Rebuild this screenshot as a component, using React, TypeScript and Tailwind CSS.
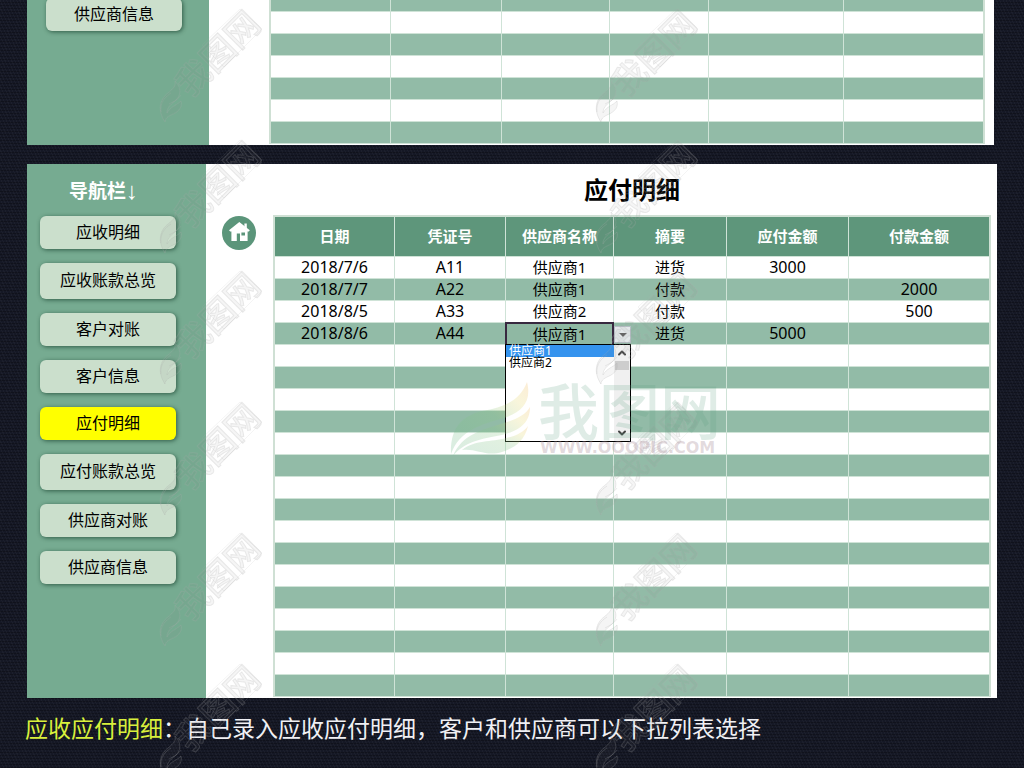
import { useState } from 'react';
import { ChevronDown, ChevronUp } from 'lucide-react';

const navItems = [
  { label: '应收明细' },
  { label: '应收账款总览', tall: true },
  { label: '客户对账' },
  { label: '客户信息' },
  { label: '应付明细', active: true },
  { label: '应付账款总览', tall: true },
  { label: '供应商对账' },
  { label: '供应商信息' },
];

const headers = ['日期', '凭证号', '供应商名称', '摘要', '应付金额', '付款金额'];

const records = [
  { date: '2018/7/6', no: 'A11', supplier: '供应商1', note: '进货', due: '3000', paid: '' },
  { date: '2018/7/7', no: 'A22', supplier: '供应商1', note: '付款', due: '', paid: '2000' },
  { date: '2018/8/5', no: 'A33', supplier: '供应商2', note: '付款', due: '', paid: '500' },
  { date: '2018/8/6', no: 'A44', supplier: '供应商1', note: '进货', due: '5000', paid: '' },
];

const suppliers = ['供应商1', '供应商2'];

const cell = 'border-r border-b border-[#cfe3d7] p-0 last:border-r-0';

const NavButton = ({ label, tall, active }: { label: string; tall?: boolean; active?: boolean }) => (
  <button
    className={`w-[136px] shrink-0 rounded-md pb-[2px] text-base text-black shadow-[1px_1px_4px_rgba(20,60,40,0.7)] ${
      tall ? 'h-9' : 'h-[33px]'
    } ${active ? 'bg-[#ffff00]' : 'bg-[#cbdfcc]'}`}
  >
    {label}
  </button>
);

const HomeIcon = () => (
  <svg viewBox="0 0 34 34" className="h-[34px] w-[34px]" aria-hidden="true">
    <circle cx="17" cy="17" r="17" fill="#5b957a" />
    <path
      fill="#fff"
      fillRule="evenodd"
      d="M17.3 6 27.8 14.2 26.8 15.6H25.6V25H18V17.4H14.8V25H9.4V15.6H8.2L7 14.2ZM19.4 16.4V19.4H23V16.4Z"
    />
    <path fill="#fff" d="M22.4 7.6h2.4v5l-2.4-2z" />
  </svg>
);

const SupplierPicker = () => {
  const [value, setValue] = useState(suppliers[0]);

  return (
    <div className="relative h-[21px]">
      <select
        aria-label="供应商名称"
        value={value}
        onChange={(e) => setValue(e.target.value)}
        className="absolute -top-px -left-px h-6 w-[calc(100%+2px)] appearance-none border-2 border-[#37283f] bg-[#8fb8a3] pb-[2px] text-center text-[15px] leading-5 text-black [text-align-last:center]"
      >
        {suppliers.map((s) => (
          <option key={s}>{s}</option>
        ))}
      </select>
      <button
        aria-label="展开"
        className="absolute top-[3px] left-full ml-px flex h-[17px] w-[17px] items-center justify-center border border-[#b5bdc4] bg-[#e3e8ea]"
      >
        <svg viewBox="0 0 8 4" className="h-1 w-2" aria-hidden="true">
          <path d="M0 0h8L4 4z" fill="#666" />
        </svg>
      </button>
      <div className="absolute top-[21px] -left-px z-10 flex h-[98px] w-[126px] border border-black bg-white">
        <ul role="listbox" aria-label="供应商列表" className="flex-1 text-left text-xs leading-3">
          {suppliers.map((s) => (
            <li
              key={s}
              role="option"
              aria-selected={s === value}
              onClick={() => setValue(s)}
              className={`h-3 pl-[3px] ${s === value ? 'bg-[#3593ee] text-white' : 'text-black'}`}
            >
              {s}
            </li>
          ))}
        </ul>
        <div className="flex w-4 flex-col items-center bg-[#f0f0f0]">
          <ChevronUp className="my-[2px] h-3 w-3 text-[#444]" strokeWidth={4} />
          <div className="h-[9px] w-[14px] bg-[#cdcdcd]" />
          <ChevronDown className="mt-auto mb-[2px] h-3 w-3 text-[#444]" strokeWidth={4} />
        </div>
      </div>
    </div>
  );
};

// Site marks laid over the whole page
const Watermarks = () => (
  <div className="pointer-events-none absolute inset-0 z-20 overflow-hidden" aria-hidden="true">
    <svg className="h-full w-full">
      <defs>
        <pattern id="mark" width="436" height="131" patternUnits="userSpaceOnUse">
          <g fill="#777" fillOpacity="0.07" stroke="#aaa" strokeOpacity="0.22">
            <path d="M165 122C157 110 160 99 168 93 174 88 176 86 175 81 182 88 181 96 175 101 170 105 167 108 167 113 171 106 176 106 181 101 183 109 176 113 171 115 167 117 165 119 165 122Z" />
            <path d="M161 112C160 102 165 97 171 93M169 104C175 101 178 99 181 95" fill="none" />
            <text x="-38" y="12" fontSize="34" fontWeight="500" transform="translate(209 63) rotate(-45)">
              我图网
            </text>
            <path d="M202 45 224 67 262 29 240 9Z" fill="none" strokeOpacity="0.12" />
          </g>
        </pattern>
        <linearGradient id="leaf" x1="0" y1="1" x2="1" y2="0">
          <stop offset="0" stopColor="#6fb98c" />
          <stop offset="0.55" stopColor="#8cc787" />
          <stop offset="0.8" stopColor="#e6da74" />
          <stop offset="1" stopColor="#f4b860" />
        </linearGradient>
      </defs>
      <rect width="100%" height="100%" fill="url(#mark)" />
      <g transform="translate(448 380)" fill="url(#leaf)" fillOpacity="0.26">
        <path d="M3 74C2 48 14 36 34 31 58 27 72 20 79 2 84 22 74 32 56 38 32 45 12 50 3 74Z" />
        <path d="M5 76C14 54 34 50 56 43 70 39 78 34 82 27 82 44 70 51 54 55 32 59 16 62 5 76Z" />
        <path d="M14 70C26 60 44 62 58 58 68 56 76 52 80 46 76 62 66 68 54 72 38 77 28 68 14 70Z" />
      </g>
      <text x="538" y="435" fontSize="61" fontWeight="500" fill="#5f9f80" fillOpacity="0.2">我图网</text>
      <text x="540" y="453" fontSize="16" fontWeight="700" fill="#a88c98" fillOpacity="0.32" className="font-['DejaVu_Sans',sans-serif]">
        WWW.OOOPIC.COM
      </text>
    </svg>
  </div>
);

const App = () => {
  const blankRows = Array.from({ length: 16 }, (_, i) => i);

  return (
    <div
      lang="zh-CN"
      className="relative min-h-screen overflow-hidden bg-[#151825] bg-[repeating-linear-gradient(65deg,rgba(255,255,255,0.03)_0_1px,transparent_1px_3px),repeating-linear-gradient(0deg,rgba(0,0,0,0.25)_0_1px,transparent_1px_3px)] px-[27px] font-['Noto_Sans','Noto_Sans_CJK_SC',sans-serif] text-black"
    >
      {/* Previous sheet, scrolled out at the top */}
      <section className="mr-[3px] flex h-[145px] overflow-hidden bg-white">
        <aside className="-mt-[2px] w-[182px] shrink-0 bg-[#76ab91] pl-[19px]">
          <NavButton label="供应商信息" />
        </aside>
        <div className="flex-1 pr-[9px] pl-[60px]">
          <div className="border-x-2 border-[#cfe0d4]">
            <table className="w-full table-fixed border-separate border-spacing-0" aria-label="客户明细">
              <colgroup>
                <col className="w-[120px]" />
                <col className="w-[111px]" />
                <col className="w-[108px]" />
                <col className="w-[99px]" />
                <col className="w-[135px]" />
                <col className="w-[139px]" />
              </colgroup>
              <tbody>
                {[0, 1, 2, 3, 4, 5, 6].map((row) => (
                  <tr key={row} className={`${row === 0 ? 'h-3' : 'h-[22px]'} ${row % 2 === 0 ? 'bg-[#92bba7]' : 'bg-white'}`}>
                    {headers.map((h) => (
                      <td key={h} className={cell} />
                    ))}
                  </tr>
                ))}
              </tbody>
            </table>
          </div>
        </div>
      </section>

      {/* Payables sheet */}
      <section className="mt-[19px] flex bg-white">
        <aside className="flex w-[179px] shrink-0 flex-col gap-[14px] bg-[#76ab91] pl-[13px]">
          <h2 className="flex h-[38px] items-center pt-4 pl-[29px] text-[19px] leading-6 font-bold text-white">
            导航栏<span className="font-['Liberation_Serif',serif] text-2xl leading-6 font-normal">↓</span>
          </h2>
          {navItems.map((item) => (
            <NavButton key={item.label} {...item} />
          ))}
        </aside>
        <div className="flex flex-1 gap-[17px] pr-[6px] pb-px pl-4">
          <a href="#home" aria-label="首页" className="mt-[52px] h-[34px] shrink-0">
            <HomeIcon />
          </a>
          <div className="flex-1">
            <h1 className="h-[51px] pt-[10px] text-center text-2xl leading-8 font-bold">应付明细</h1>
            <div className="border-x-2 border-t-2 border-[#cfe0d4]">
              <table className="w-full table-fixed border-separate border-spacing-0 text-center">
                <colgroup>
                  <col className="w-[120px]" />
                  <col className="w-[111px]" />
                  <col className="w-[108px]" />
                  <col className="w-[113px]" />
                  <col className="w-[122px]" />
                  <col className="w-[140px]" />
                </colgroup>
                <thead>
                  <tr className="h-10 bg-[#5e967b] text-[15px] leading-5 text-white">
                    {headers.map((h) => (
                      <th key={h} className="border-r border-b border-[#cfe3d7] p-0 pb-[2px] font-bold last:border-r-0">
                        {h}
                      </th>
                    ))}
                  </tr>
                </thead>
                <tbody>
                  {records.map((r, i) => (
                    <tr key={r.no} className={`h-[22px] text-[15px] leading-[21px] ${i % 2 ? 'bg-[#92bba7]' : 'bg-white'}`}>
                      <td className={`${cell} text-base leading-[21px]`}>{r.date}</td>
                      <td className={`${cell} text-base leading-[21px]`}>{r.no}</td>
                      <td className={cell}>{i === 3 ? <SupplierPicker /> : r.supplier}</td>
                      <td className={cell}>{r.note}</td>
                      <td className={`${cell} text-base leading-[21px]`}>{r.due}</td>
                      <td className={`${cell} text-base leading-[21px]`}>{r.paid}</td>
                    </tr>
                  ))}
                  {blankRows.map((row) => (
                    <tr key={row} className={`h-[22px] ${row % 2 ? 'bg-[#92bba7]' : 'bg-white'}`}>
                      {headers.map((h) => (
                        <td key={h} className={cell} />
                      ))}
                    </tr>
                  ))}
                </tbody>
              </table>
            </div>
          </div>
        </div>
      </section>

      <p className="-ml-[2px] pt-[14px] text-[23px] leading-8 text-[#f0f0f4]">
        <span className="text-[#d9f03c]">应收应付明细</span>：自己录入应收应付明细，客户和供应商可以下拉列表选择
      </p>

      <Watermarks />
    </div>
  );
};

export default App;
